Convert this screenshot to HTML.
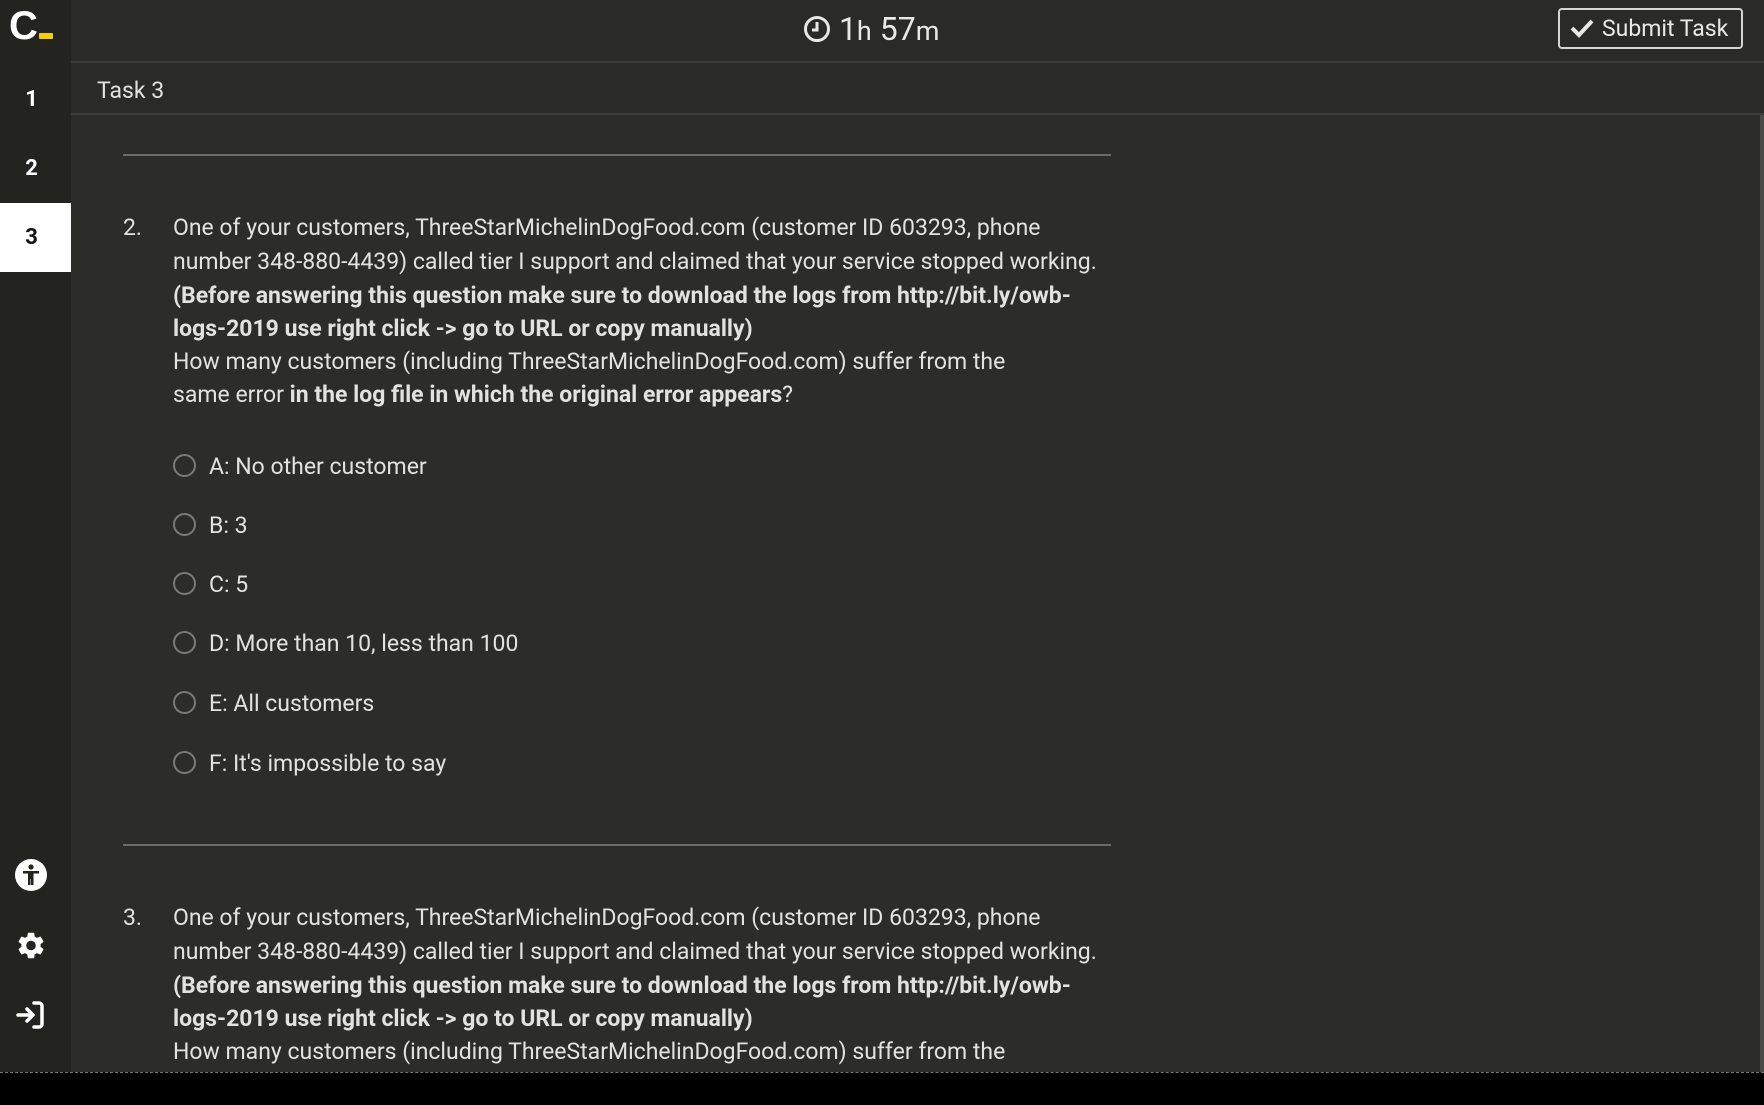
<!DOCTYPE html>
<html><head><meta charset="utf-8"><style>
*{margin:0;padding:0;box-sizing:border-box}
body{width:1764px;height:1105px;background:#2c2c29;font-family:"Roboto","Liberation Sans",sans-serif;color:#e2e2e0;position:relative;overflow:hidden}
.abs{position:absolute}
.hdr{left:0;top:0;width:1764px;height:63px;background:#2a2a27;border-bottom:2px solid #3c3c39}
.side{left:0;top:63px;width:71px;height:1009px;background:#232320}
.num{left:-4px;width:71px;text-align:center;font-size:22px;font-weight:bold;color:#fff}
.task{left:71px;top:63px;width:1693px;height:52px;border-bottom:2px solid #3c3c39;background:#2a2a27}
.line{left:123px;width:988px;height:2px;background:#6a6a67}
.t{left:173px;font-size:23px;white-space:nowrap;line-height:33px}
.b{font-weight:bold}
.n{left:123px;font-size:23px;line-height:33px}
.opt{left:173px;font-size:23px;line-height:30px;white-space:nowrap}
.opt i{display:inline-block;width:23px;height:23px;border:2px solid #7a7a77;border-radius:50%;vertical-align:-3px;margin-right:13px}
</style></head><body>
<div class="abs hdr"></div>
<div class="abs" style="left:0;top:0;width:71px;height:63px;background:#232320"></div>
<div class="abs" style="left:9px;top:4px;font-size:40px;font-weight:bold;color:#fff;font-family:'Liberation Sans',sans-serif">C</div>
<div class="abs" style="left:39px;top:33px;width:14px;height:6px;background:#f5d000;border-radius:1px"></div>
<div class="abs" style="left:803px;top:10px;font-size:32px;color:#e8e8e6;white-space:nowrap">
<svg width="28" height="28" viewBox="0 0 28 28" style="vertical-align:-3px"><circle cx="14" cy="14" r="11.5" fill="none" stroke="#e8e8e6" stroke-width="3"/><path d="M14 7v8h-5" fill="none" stroke="#e8e8e6" stroke-width="3"/></svg> 1<span style="font-size:27px">h</span> 57<span style="font-size:27px">m</span></div>
<div class="abs" style="left:1558px;top:8px;width:185px;height:41px;border:2px solid #d5d5d3;border-radius:4px;font-size:23px;color:#e8e8e6;padding:5px 0 0 10px;white-space:nowrap">
<svg width="24" height="20" viewBox="0 0 24 20" style="vertical-align:-2px;margin-right:8px"><path d="M2 10l7 7L22 3" fill="none" stroke="#e8e8e6" stroke-width="4"/></svg>Submit Task</div>
<div class="abs side"></div>
<div class="abs num" style="top:87px">1</div>
<div class="abs num" style="top:156px">2</div>
<div class="abs" style="left:0;top:203px;width:71px;height:69px;background:#fff"></div>
<div class="abs num" style="top:225px;color:#111">3</div>
<svg class="abs" style="left:14px;top:858px" width="34" height="34" viewBox="0 0 34 34"><circle cx="17" cy="17" r="16" fill="#fff"/><circle cx="17" cy="9" r="2.6" fill="#232320"/><path d="M9 13h16v2.5h-5.5V27h-2.5v-6h-0.5v6H14V15.5H9z" fill="#232320"/></svg>
<svg class="abs" style="left:15px;top:929px" width="32" height="33" viewBox="0 0 24 24"><path fill="#fff" d="M19.14 12.94c.04-.3.06-.61.06-.94s-.02-.64-.07-.94l2.030-1.58a.49.49 0 0 0 .12-.61l-1.920-3.32a.49.49 0 0 0-.59-.22l-2.39.96c-.5-.38-1.03-.7-1.62-.94l-.36-2.54a.48.48 0 0 0-.48-.41h-3.840a.48.48 0 0 0-.47.41l-.36 2.54c-.59.24-1.13.57-1.62.94l-2.39-.96a.48.48 0 0 0-.59.22L2.74 8.87a.47.47 0 0 0 .12.61l2.03 1.58c-.05.3-.09.63-.09.94s.02.64.07.94l-2.03 1.58a.49.49 0 0 0-.12.61l1.92 3.32c.12.22.37.29.59.22l2.39-.96c.5.38 1.03.7 1.62.94l.36 2.54c.05.24.24.41.48.41h3.84c.24 0 .44-.17.47-.41l.36-2.54c.59-.24 1.13-.56 1.62-.94l2.39.96c.22.08.47 0 .59-.22l1.92-3.32a.47.47 0 0 0-.12-.61zM12 15.6A3.6 3.6 0 1 1 12 8.4a3.6 3.6 0 0 1 0 7.2z"/></svg>
<svg class="abs" style="left:15px;top:999px" width="32" height="32" viewBox="0 0 32 32"><path d="M3 16h14M12 10l6 6-6 6" fill="none" stroke="#fff" stroke-width="3.5" stroke-linecap="round" stroke-linejoin="round"/><path d="M19 4h5a3 3 0 0 1 3 3v18a3 3 0 0 1-3 3h-5" fill="none" stroke="#fff" stroke-width="3.5" stroke-linecap="round"/></svg>
<div class="abs task"></div>
<div class="abs" style="left:97px;top:77px;font-size:23px;color:#e2e2e0">Task 3</div>
<div class="abs" style="left:1760px;top:115px;width:4px;height:957px;background:#4a4a47"></div>
<div class="abs line" style="top:154px"></div>
<div class="abs n" style="top:211px">2.</div>
<div class="abs t" style="top:211px">One of your customers, ThreeStarMichelinDogFood.com (customer ID 603293, phone</div>
<div class="abs t" style="top:245px">number 348-880-4439) called tier I support and claimed that your service stopped working.</div>
<div class="abs t b" style="top:279px">(Before answering this question make sure to download the logs from http://bit.ly/owb-</div>
<div class="abs t b" style="top:312px">logs-2019 use right click -&gt; go to URL or copy manually)</div>
<div class="abs t" style="top:345px">How many customers (including ThreeStarMichelinDogFood.com) suffer from the</div>
<div class="abs t" style="top:378px">same error <b>in the log file in which the original error appears</b>?</div>
<div class="abs opt" style="top:452px"><i></i>A: No other customer</div>
<div class="abs opt" style="top:511px"><i></i>B: 3</div>
<div class="abs opt" style="top:570px"><i></i>C: 5</div>
<div class="abs opt" style="top:629px"><i></i>D: More than 10, less than 100</div>
<div class="abs opt" style="top:689px"><i></i>E: All customers</div>
<div class="abs opt" style="top:749px"><i></i>F: It's impossible to say</div>
<div class="abs line" style="top:844px"></div>
<div class="abs n" style="top:901px">3.</div>
<div class="abs t" style="top:901px">One of your customers, ThreeStarMichelinDogFood.com (customer ID 603293, phone</div>
<div class="abs t" style="top:935px">number 348-880-4439) called tier I support and claimed that your service stopped working.</div>
<div class="abs t b" style="top:969px">(Before answering this question make sure to download the logs from http://bit.ly/owb-</div>
<div class="abs t b" style="top:1002px">logs-2019 use right click -&gt; go to URL or copy manually)</div>
<div class="abs t" style="top:1035px">How many customers (including ThreeStarMichelinDogFood.com) suffer from the</div>
<div class="abs" style="left:0;top:1072px;width:1764px;height:33px;background:#000;border-top:1px dashed #777"></div>
</body></html>
